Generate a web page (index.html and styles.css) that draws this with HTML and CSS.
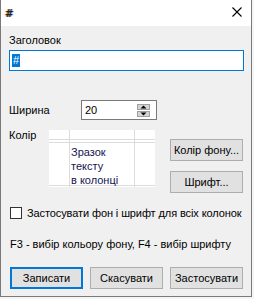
FILE: index.html
```html
<!DOCTYPE html>
<html>
<head>
<meta charset="utf-8">
<link rel="stylesheet" href="styles.css">
</head>
<body>
<div class="desk">
  <div class="window">
    <div class="titlebar">
      <span class="appicon">#</span>
      <svg class="close" width="10" height="10" viewBox="0 0 10 10"><path d="M0.5 0.5 L9.5 9.5 M9.5 0.5 L0.5 9.5" stroke="#000" stroke-width="1.1" fill="none"/></svg>
    </div>
    <div class="body">
      <div class="label">Заголовок</div>
      <div class="input"><span class="sel">#</span></div>

      <div class="row-width">
        <span class="label w-label">Ширина</span>
        <div class="spin">
          <span class="spin-val">20</span>
          <div class="spin-btns">
            <svg width="13" height="13" viewBox="0 0 13 13">
              <rect x="0.5" y="0.5" width="12" height="5" fill="#d4d4d4" stroke="#a0a0a0"/>
              <path d="M3.5 4.5 L6.5 1.5 L9.5 4.5 Z" fill="#000"/>
              <rect x="0.5" y="7.5" width="12" height="5" fill="#d4d4d4" stroke="#a0a0a0"/>
              <path d="M3.5 8.5 L6.5 11.5 L9.5 8.5 Z" fill="#000"/>
            </svg>
          </div>
        </div>
      </div>

      <div class="row-color">
        <span class="label c-label">Колір</span>
        <div class="preview">
          <div class="pcol c1"><div class="phead"></div><div class="pbody"></div></div>
          <div class="pcol c2"><div class="phead"></div><div class="pbody sample">Зразок<br>тексту<br>в колонці</div></div>
          <div class="pcol c3"><div class="phead"></div><div class="pbody"></div></div>
        </div>
        <div class="side-btns">
          <div class="btn">Колір фону...</div>
          <div class="btn">Шрифт...</div>
        </div>
      </div>

      <div class="check-row">
        <span class="checkbox"></span>
        <span class="label narrow">Застосувати фон і шрифт для всіх колонок</span>
      </div>

      <div class="hint label">F3 - вибір кольору фону, F4 - вибір шрифту</div>

      <div class="actions">
        <div class="btn default">Записати</div>
        <div class="btn">Скасувати</div>
        <div class="btn">Застосувати</div>
      </div>
    </div>
  </div>
</div>
</body>
</html>
```

FILE: styles.css
```css
html, body {
  margin: 0;
  padding: 0;
}
body {
  width: 254px;
  height: 299px;
  overflow: hidden;
  background: #f4f6f5;
  font-family: "Liberation Sans", Arial, sans-serif;
  font-size: 11px;
  color: #000;
}
.desk {
  width: 254px;
  height: 299px;
}
.window {
  width: 250px;
  height: 296px;
  border: 1px solid #7a7a7a;
  border-top: none;
  background: #f0f0f0;
}
.titlebar {
  height: 26px;
  background: #fff;
  display: flex;
  align-items: flex-start;
  justify-content: space-between;
}
.appicon {
  font-family: "DejaVu Sans", sans-serif;
  font-weight: bold;
  font-size: 10px;
  line-height: 10px;
  margin: 9px 0 0 4px;
  color: #222;
  text-shadow: -1px 0 0 rgba(230,140,40,0.7), 1px 0 0 rgba(60,120,220,0.6);
}
.close {
  margin: 7px 9px 0 0;
  display: block;
}
.body {
  padding: 7px 0 0 8px;
}
.label {
  line-height: 14px;
  white-space: nowrap;
}
.narrow {
  letter-spacing: -0.1px;
}
.input {
  margin-top: 3px;
  width: 231px;
  height: 19px;
  border: 1px solid #0078d7;
  background: #fff;
  display: flex;
  align-items: center;
  padding-left: 2px;
}
.sel {
  background: #0078d7;
  color: #fff;
  line-height: 13px;
  padding: 0 1px;
}
.row-width {
  margin-top: 29px;
  display: flex;
  align-items: center;
}
.w-label {
  width: 72px;
}
.spin {
  width: 74px;
  height: 18px;
  border: 1px solid #7a7a7a;
  background: #fff;
  display: flex;
  align-items: center;
  justify-content: space-between;
}
.spin-val {
  padding-left: 3px;
  line-height: 14px;
}
.spin-btns {
  margin-right: 6px;
  display: flex;
}
.spin-btns svg {
  display: block;
}
.row-color {
  margin-top: 10px;
  display: flex;
  align-items: flex-start;
}
.c-label {
  width: 40px;
  margin-top: -2px;
}
.preview {
  width: 106px;
  height: 57px;
  background: #fff;
  display: flex;
}
.pcol {
  display: flex;
  flex-direction: column;
  border-right: 1px solid #dcdcdc;
}
.c1 { width: 20px; }
.c2 { width: 64px; }
.c3 { width: 20px; border-right: none; }
.phead {
  height: 9px;
  border-bottom: 1px solid #dcdcdc;
}
.pbody {
  margin-top: 2px;
  height: 42px;
  border-top: 1px solid #dcdcdc;
  border-bottom: 1px solid #dcdcdc;
}
.sample {
  padding: 2px 0 0 1px;
  height: 40px;
  line-height: 14px;
  color: #141450;
  white-space: nowrap;
}
.side-btns {
  margin-left: 15px;
  padding-top: 9px;
  display: flex;
  flex-direction: column;
  gap: 10px;
}
.btn {
  box-sizing: border-box;
  width: 73px;
  height: 22px;
  border: 1px solid #adadad;
  background: #e1e1e1;
  display: flex;
  align-items: center;
  justify-content: center;
  white-space: nowrap;
}
.btn.default {
  border: 2px solid #0078d7;
}
.check-row {
  margin-top: 13px;
  display: flex;
  align-items: center;
}
.checkbox {
  box-sizing: border-box;
  flex-shrink: 0;
  width: 12px;
  height: 12px;
  border: 1px solid #333;
  background: #fff;
  margin: 0 5px 0 1px;
}
.hint {
  margin-top: 17px;
  padding-left: 1px;
}
.actions {
  margin-top: 16px;
  padding-left: 1px;
  display: flex;
  gap: 7px;
}
```
